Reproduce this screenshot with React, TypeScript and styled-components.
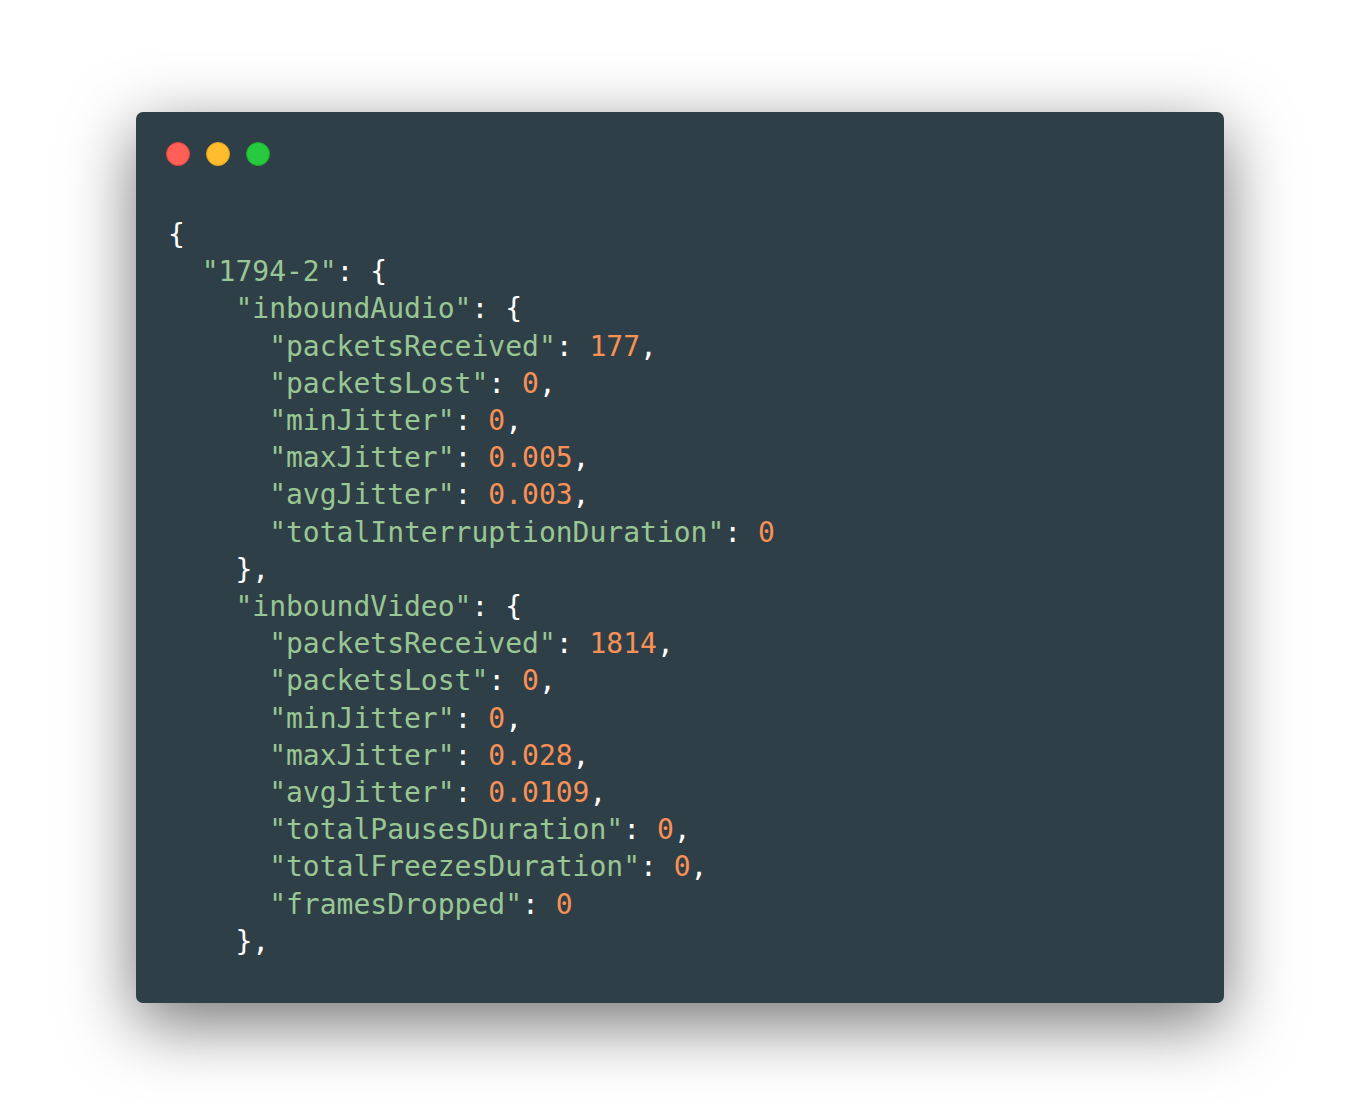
import React from "react";
import styled, { createGlobalStyle } from "styled-components";

const Global = createGlobalStyle`
  html, body { margin: 0; padding: 0; background: #ffffff; }
  #root { min-height: 1116px; }
`;

const Page = styled.div`
  width: 1360px;
  height: 1116px;
  display: flex;
  align-items: center;
  justify-content: center;
  box-sizing: border-box;
  padding-bottom: 1px;
`;

const Window = styled.div`
  width: 1088px;
  height: 891px;
  box-sizing: border-box;
  background: #2f3f47;
  border-radius: 7px;
  box-shadow: 0 20px 68px rgba(0, 0, 0, 0.55);
  padding: 30px 30px 0 30px;
  display: flex;
  flex-direction: column;
  overflow: hidden;
`;

const Controls = styled.div`
  display: flex;
  gap: 16px;
  height: 24px;
`;

const Light = styled.span<{ $fill: string; $edge: string }>`
  width: 24px;
  height: 24px;
  border-radius: 50%;
  box-sizing: border-box;
  background: ${(p) => p.$fill};
  border: 1px solid ${(p) => p.$edge};
`;

const Code = styled.pre`
  margin: 50px 0 0 2px;
  font-family: "DejaVu Sans Mono", monospace;
  font-size: 28px;
  line-height: 37.2px;
  color: #ffffff;
  white-space: pre;
`;

const Str = styled.span`
  color: #99c794;
`;

const Num = styled.span`
  color: #f99157;
`;

type Line = { indent: number; key?: string; num?: string; tail: string };

const lines: Line[] = [
  { indent: 0, tail: "{" },
  { indent: 1, key: "1794-2", tail: ": {" },
  { indent: 2, key: "inboundAudio", tail: ": {" },
  { indent: 3, key: "packetsReceived", num: "177", tail: "," },
  { indent: 3, key: "packetsLost", num: "0", tail: "," },
  { indent: 3, key: "minJitter", num: "0", tail: "," },
  { indent: 3, key: "maxJitter", num: "0.005", tail: "," },
  { indent: 3, key: "avgJitter", num: "0.003", tail: "," },
  { indent: 3, key: "totalInterruptionDuration", num: "0", tail: "" },
  { indent: 2, tail: "}," },
  { indent: 2, key: "inboundVideo", tail: ": {" },
  { indent: 3, key: "packetsReceived", num: "1814", tail: "," },
  { indent: 3, key: "packetsLost", num: "0", tail: "," },
  { indent: 3, key: "minJitter", num: "0", tail: "," },
  { indent: 3, key: "maxJitter", num: "0.028", tail: "," },
  { indent: 3, key: "avgJitter", num: "0.0109", tail: "," },
  { indent: 3, key: "totalPausesDuration", num: "0", tail: "," },
  { indent: 3, key: "totalFreezesDuration", num: "0", tail: "," },
  { indent: 3, key: "framesDropped", num: "0", tail: "" },
  { indent: 2, tail: "}," },
];

export default function App() {
  return (
    <>
      <Global />
      <Page>
        <Window>
          <Controls>
            <Light $fill="#ff5f56" $edge="#e0443e" />
            <Light $fill="#ffbd2e" $edge="#dea123" />
            <Light $fill="#27c93f" $edge="#1aab29" />
          </Controls>
          <Code>
            {lines.map((l, i) => (
              <React.Fragment key={i}>
                {"  ".repeat(l.indent)}
                {l.key !== undefined && <Str>{`"${l.key}"`}</Str>}
                {l.num !== undefined ? (
                  <>
                    {": "}
                    <Num>{l.num}</Num>
                    {l.tail}
                  </>
                ) : (
                  l.tail
                )}
                {i < lines.length - 1 ? "\n" : ""}
              </React.Fragment>
            ))}
          </Code>
        </Window>
      </Page>
    </>
  );
}
